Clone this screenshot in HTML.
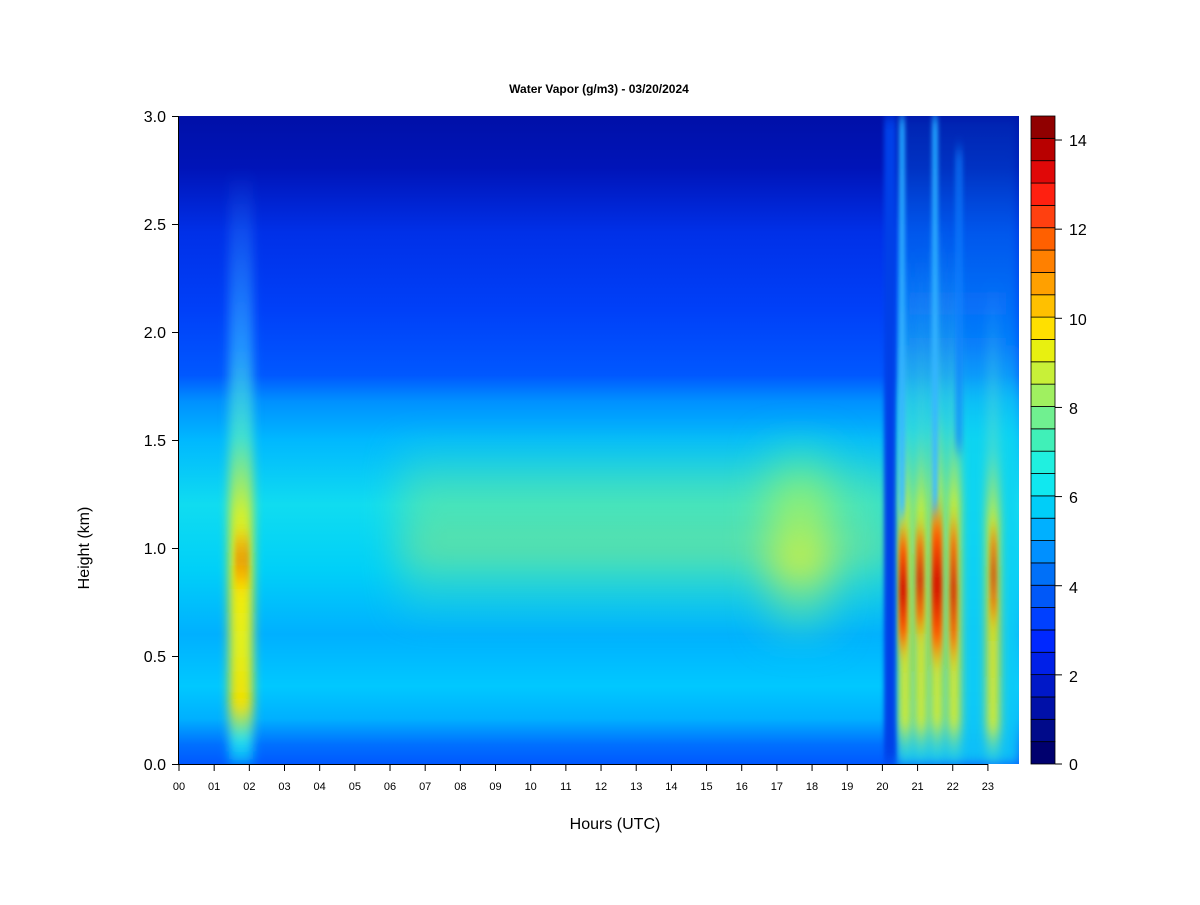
<!DOCTYPE html>
<html><head><meta charset="utf-8"><style>
body{margin:0;background:#fff;width:1200px;height:900px;overflow:hidden;font-family:"Liberation Sans",Arial,sans-serif}
</style></head><body>
<svg width="1200" height="900" xmlns="http://www.w3.org/2000/svg" font-family="Liberation Sans, Arial, sans-serif">
<defs>
<linearGradient id="base" x1="0" y1="0" x2="0" y2="1">
<stop offset="0" stop-color="#0010a8"/>
<stop offset="0.08" stop-color="#0014b8"/>
<stop offset="0.18" stop-color="#0030e8"/>
<stop offset="0.3" stop-color="#0040f8"/>
<stop offset="0.4" stop-color="#0058ff"/>
<stop offset="0.44" stop-color="#0090ff"/>
<stop offset="0.5" stop-color="#00b8ff"/>
<stop offset="0.6" stop-color="#10dcf0"/>
<stop offset="0.7" stop-color="#00d0f8"/>
<stop offset="0.8" stop-color="#00b0ff"/>
<stop offset="0.88" stop-color="#00c8ff"/>
<stop offset="0.93" stop-color="#00b0ff"/>
<stop offset="0.97" stop-color="#0070ff"/>
<stop offset="1" stop-color="#0058ff"/>
</linearGradient>
<linearGradient id="cyf" x1="0" y1="0" x2="0" y2="1">
<stop offset="0" stop-color="#10c8f8" stop-opacity="0.1"/>
<stop offset="0.35" stop-color="#10c8f8" stop-opacity="0.4"/>
<stop offset="0.5" stop-color="#10d8f0" stop-opacity="0.9"/>
<stop offset="1" stop-color="#10c8f8" stop-opacity="0.9"/>
</linearGradient>
<linearGradient id="yel" x1="0" y1="0" x2="0" y2="1">
<stop offset="0" stop-color="#40a0ff" stop-opacity="0"/>
<stop offset="0.3" stop-color="#30b0ff" stop-opacity="0.7"/>
<stop offset="0.45" stop-color="#40e0d0"/>
<stop offset="0.58" stop-color="#d0f030"/>
<stop offset="0.68" stop-color="#f8e800"/>
<stop offset="0.8" stop-color="#e0f020"/>
<stop offset="0.9" stop-color="#f0e000"/>
<stop offset="0.96" stop-color="#20e0f0"/>
<stop offset="1" stop-color="#00a0ff"/>
</linearGradient>
<linearGradient id="yel2" x1="0" y1="0" x2="0" y2="1">
<stop offset="0" stop-color="#40c0ff" stop-opacity="0"/>
<stop offset="0.35" stop-color="#60e0c0" stop-opacity="0.6"/>
<stop offset="0.5" stop-color="#e0f020"/>
<stop offset="0.7" stop-color="#f8e000"/>
<stop offset="0.92" stop-color="#e8f020"/>
<stop offset="1" stop-color="#20e0f0" stop-opacity="0.3"/>
</linearGradient>
<linearGradient id="grn" x1="0" y1="0" x2="0" y2="1">
<stop offset="0" stop-color="#20e8d0" stop-opacity="0"/>
<stop offset="0.3" stop-color="#90f070" stop-opacity="0.8"/>
<stop offset="0.6" stop-color="#d0f040" stop-opacity="0.9"/>
<stop offset="1" stop-color="#20e8d0" stop-opacity="0"/>
</linearGradient>
<linearGradient id="red" x1="0" y1="0" x2="0" y2="1">
<stop offset="0" stop-color="#ff8000" stop-opacity="0"/>
<stop offset="0.2" stop-color="#ff6000"/>
<stop offset="0.5" stop-color="#d01000"/>
<stop offset="0.8" stop-color="#ff6000"/>
<stop offset="1" stop-color="#ffa000" stop-opacity="0"/>
</linearGradient>
<linearGradient id="lb" x1="0" y1="0" x2="0" y2="1">
<stop offset="0" stop-color="#20a0ff"/>
<stop offset="1" stop-color="#40c0ff"/>
</linearGradient>
<filter id="bx" filterUnits="userSpaceOnUse" x="0" y="0" width="1200" height="900"><feGaussianBlur stdDeviation="5 6"/></filter>
<filter id="bs" filterUnits="userSpaceOnUse" x="0" y="0" width="1200" height="900"><feGaussianBlur stdDeviation="2 8"/></filter>
<filter id="bb" filterUnits="userSpaceOnUse" x="0" y="0" width="1200" height="900"><feGaussianBlur stdDeviation="20 12"/></filter>
<clipPath id="pc"><rect x="179" y="116" width="840" height="648"/></clipPath>
</defs>
<text x="599" y="93" font-size="12" font-weight="bold" text-anchor="middle">Water Vapor (g/m3) - 03/20/2024</text>
<g clip-path="url(#pc)">
<rect x="179" y="116" width="840" height="648" fill="url(#base)"/>
<rect x="400" y="420" width="500" height="220" fill="url(#grn)" opacity="0.45" filter="url(#bb)"/>
<rect x="770" y="420" width="60" height="240" fill="url(#grn)" filter="url(#bb)"/>
<rect x="229" y="170" width="24" height="594" fill="url(#yel)" filter="url(#bx)"/>
<rect x="897" y="116" width="122" height="648" fill="url(#cyf)" filter="url(#bx)"/>
<rect x="899" y="250" width="12" height="514" fill="url(#yel2)" filter="url(#bx)"/>
<rect x="915" y="250" width="12" height="514" fill="url(#yel2)" filter="url(#bx)"/>
<rect x="931" y="220" width="12" height="544" fill="url(#yel2)" filter="url(#bx)"/>
<rect x="948" y="240" width="12" height="524" fill="url(#yel2)" filter="url(#bx)"/>
<rect x="987" y="280" width="12" height="484" fill="url(#yel2)" filter="url(#bx)"/>
<rect x="884" y="116" width="12" height="648" fill="#0040e8" filter="url(#bs)"/>
<rect x="899" y="116" width="6" height="400" fill="url(#lb)" filter="url(#bs)"/>
<rect x="932" y="116" width="6" height="400" fill="url(#lb)" filter="url(#bs)"/>
<rect x="955" y="150" width="8" height="300" fill="#1080ff" filter="url(#bs)" opacity="0.6"/>
<rect x="899" y="520" width="8" height="140" fill="url(#red)" filter="url(#bs)"/>
<rect x="916" y="520" width="8" height="120" fill="url(#red)" filter="url(#bs)" opacity="0.8"/>
<rect x="932" y="500" width="10" height="170" fill="url(#red)" filter="url(#bs)"/>
<rect x="950" y="510" width="7" height="160" fill="url(#red)" filter="url(#bs)" opacity="0.8"/>
<rect x="990" y="520" width="7" height="110" fill="url(#red)" filter="url(#bs)" opacity="0.6"/>
<rect x="235" y="530" width="14" height="60" fill="url(#red)" filter="url(#bs)" opacity="0.35"/>
</g>
<g stroke="#000" stroke-width="1">
<line x1="179" y1="764.5" x2="988" y2="764.5"/>
<line x1="178.5" y1="116" x2="178.5" y2="764"/>
</g>
<g stroke="#000">
<line x1="172" y1="764.5" x2="179" y2="764.5"/><line x1="172" y1="656.5" x2="179" y2="656.5"/><line x1="172" y1="548.5" x2="179" y2="548.5"/><line x1="172" y1="440.5" x2="179" y2="440.5"/><line x1="172" y1="332.5" x2="179" y2="332.5"/><line x1="172" y1="224.5" x2="179" y2="224.5"/><line x1="172" y1="116.5" x2="179" y2="116.5"/>
</g>
<g font-size="16" text-anchor="end">
<text x="166" y="770">0.0</text><text x="166" y="662">0.5</text><text x="166" y="554">1.0</text><text x="166" y="446">1.5</text><text x="166" y="338">2.0</text><text x="166" y="230">2.5</text><text x="166" y="122">3.0</text>
</g>
<text transform="translate(89,548) rotate(-90)" font-size="16" text-anchor="middle">Height (km)</text>
<text x="615" y="829" font-size="16" text-anchor="middle">Hours (UTC)</text>
<g id="xt" font-size="11" text-anchor="middle"></g>
<g id="cb"></g>
<g font-size="16">
<text x="1069" y="770">0</text><text x="1069" y="682">2</text><text x="1069" y="593">4</text><text x="1069" y="503">6</text><text x="1069" y="414">8</text><text x="1069" y="325">10</text><text x="1069" y="235">12</text><text x="1069" y="146">14</text>
</g>
</svg>
<script>
var ns="http://www.w3.org/2000/svg",xt=document.getElementById('xt');
for(var h=0;h<24;h++){var x=179+h*35.17;
var l=document.createElementNS(ns,'line');l.setAttribute('x1',x);l.setAttribute('x2',x);l.setAttribute('y1',764);l.setAttribute('y2',771);l.setAttribute('stroke','#000');xt.appendChild(l);
var t=document.createElementNS(ns,'text');t.setAttribute('x',x);t.setAttribute('y',790);t.textContent=(h<10?'0':'')+h;xt.appendChild(t);}
var cols=["#00006e","#000a8a","#0010a8","#0018c8","#0020e8","#0028ff","#0040ff","#0058f8","#0070f8","#0090ff","#00b0ff","#00cef8","#10e8f0","#20f0e0","#40f0b8","#70f090","#a0f060","#c8f038","#e8f010","#ffe000","#ffc000","#ffa000","#ff8000","#ff6000","#ff4010","#ff2010","#e00808","#b80000","#900000"];
var cb=document.getElementById('cb'),bh=648/29;
for(var i=0;i<29;i++){var r=document.createElementNS(ns,'rect');r.setAttribute('x',1031);r.setAttribute('width',24);r.setAttribute('y',764-(i+1)*bh);r.setAttribute('height',bh);r.setAttribute('fill',cols[i]);r.setAttribute('stroke','#000');r.setAttribute('stroke-width','0.8');cb.appendChild(r);}
[0,2,4,6,8,10,12,14].forEach(function(v){var y=764-v*44.57;var l=document.createElementNS(ns,'line');l.setAttribute('x1',1055);l.setAttribute('x2',1062);l.setAttribute('y1',y);l.setAttribute('y2',y);l.setAttribute('stroke','#000');cb.appendChild(l);});
</script>
</body></html>
